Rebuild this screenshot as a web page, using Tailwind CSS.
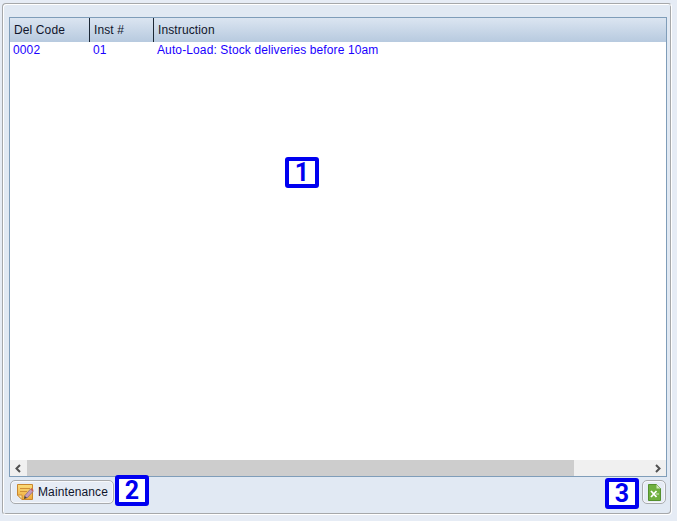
<!DOCTYPE html>
<html lang="en">
<head>
<meta charset="UTF-8">
<title>Delivery Instructions</title>
<script src="https://cdn.jsdelivr.net/npm/@tailwindcss/browser@4"></script>
</head>
<body class="bg-[#e6ecf5] font-['Liberation_Sans',Arial,sans-serif] text-[12px] tracking-[0.12px] text-[#10152b]">
<div class="relative w-[677px] h-[521px] overflow-hidden pl-[2px] pt-[3px]">
  <!-- main panel -->
  <div class="w-[670px] h-[512px] flex flex-col bg-[#e1e9f3] border border-[#a6a8aa] border-r-white border-b-white shadow-[inset_1px_1px_0_#ffffff,inset_-1px_-1px_0_#a6a8aa] rounded-[4px] pl-[6px] pr-[4px] pt-[13px]">
    <!-- grid -->
    <div class="w-[658px] h-[460px] flex flex-col bg-white border border-[#7f9db9]">
      <div class="flex h-[24px] shrink-0 items-center bg-gradient-to-b from-[#dbe5f1] to-[#b7cadf]">
        <div class="w-[80px] h-full flex items-center pl-[4px] border-r border-[#1c2836]">Del Code</div>
        <div class="w-[64px] h-full flex items-center pl-[4px] border-r border-[#1c2836]">Inst #</div>
        <div class="flex-1 h-full flex items-center pl-[4px]">Instruction</div>
      </div>
      <div class="flex h-[16px] items-center text-[#1a00ff]">
        <div class="w-[80px] pl-[3px]">0002</div>
        <div class="w-[64px] pl-[3px]">01</div>
        <div class="flex-1 pl-[3px]">Auto-Load: Stock deliveries before 10am</div>
      </div>
      <div class="flex-1"></div>
      <!-- scrollbar -->
      <div class="flex h-[16px] shrink-0 bg-[#f0f0f0]">
        <div class="w-[17px] flex items-center justify-center pr-[1px]">
          <svg width="8" height="9" viewBox="0 0 8 9"><path d="M6 1 L2.5 4.5 L6 8" fill="none" stroke="#505050" stroke-width="2"/></svg>
        </div>
        <div class="w-[547px] bg-[#cdcdcd]"></div>
        <div class="flex-1"></div>
        <div class="w-[17px] flex items-center justify-center">
          <svg width="8" height="9" viewBox="0 0 8 9"><path d="M2 1 L5.5 4.5 L2 8" fill="none" stroke="#505050" stroke-width="2"/></svg>
        </div>
      </div>
    </div>
    <!-- footer -->
    <div class="flex justify-between items-start pt-[3px] pl-[1px] pr-[1px]">
      <button class="w-[104px] h-[24px] flex items-center gap-[4px] pl-[6px] bg-[#e6ecf5] border border-[#a9abae] shadow-[inset_0_0_0_1px_#f6f8fb] rounded-[5px]">
        <svg width="17" height="17" viewBox="0 0 17 17">
          <defs>
            <linearGradient id="note" x1="0" y1="0" x2="0" y2="1">
              <stop offset="0" stop-color="#fbdc7a"/>
              <stop offset="1" stop-color="#efa93a"/>
            </linearGradient>
          </defs>
          <path d="M0.5 0.5 H15.5 V15.5 H5 L0.5 11 Z" fill="url(#note)" stroke="#c9862e"/>
          <path d="M0.5 11 H5 V15.5 Z" fill="#f9e3a6" stroke="#c9862e" stroke-width="0.8"/>
          <path d="M3 4.5 H13 M3 7.5 H10" stroke="#cf8f35" stroke-width="1"/>
          <path d="M7.5 12 L13.5 5 L16 7.5 L10 14 Z" fill="#c79ab8" stroke="#7d6a86" stroke-width="0.7"/>
          <path d="M13.5 5 L14.5 4 L16.5 6 L16 7.5 Z" fill="#d0584e"/>
          <path d="M7.5 12 L7 15 L10 14 Z" fill="#45403c"/>
        </svg>
        <span>Maintenance</span>
      </button>
      <button class="w-[24px] h-[24px] flex items-center justify-center bg-[#e6ecf5] border border-[#a9abae] shadow-[inset_0_0_0_1px_#f6f8fb] rounded-[5px]">
        <svg width="13" height="17" viewBox="0 0 13 17">
          <path d="M0.5 0.5 H8.5 L12.5 4.5 V16.5 H0.5 Z" fill="#6fb03e" stroke="#55902e"/>
          <path d="M8.5 0.5 V4.5 H12.5 Z" fill="#d3e8ba"/>
          <path d="M3 7 L8.5 13 M8.5 7 L3 13" stroke="#ffffff" stroke-width="1.8"/>
          <path d="M8 10 H11" stroke="#d8ecc4" stroke-width="1"/>
        </svg>
      </button>
    </div>
  </div>

  <!-- callout badges -->
  <div class="absolute left-[285px] top-[157px] w-[34px] h-[31px] flex items-center justify-center bg-white border-[4px] border-[#0000f0] rounded-[3px] font-['Roboto',sans-serif] font-bold text-[25px] leading-none tracking-normal text-[#0000f0]">1</div>
  <div class="absolute left-[115px] top-[475px] w-[34px] h-[31px] flex items-center justify-center bg-white border-[4px] border-[#0000f0] rounded-[3px] font-['Roboto',sans-serif] font-bold text-[25px] leading-none tracking-normal text-[#0000f0]">2</div>
  <div class="absolute left-[605px] top-[478px] w-[34px] h-[31px] flex items-center justify-center bg-white border-[4px] border-[#0000f0] rounded-[3px] font-['Roboto',sans-serif] font-bold text-[25px] leading-none tracking-normal text-[#0000f0]">3</div>
</div>
</body>
</html>
